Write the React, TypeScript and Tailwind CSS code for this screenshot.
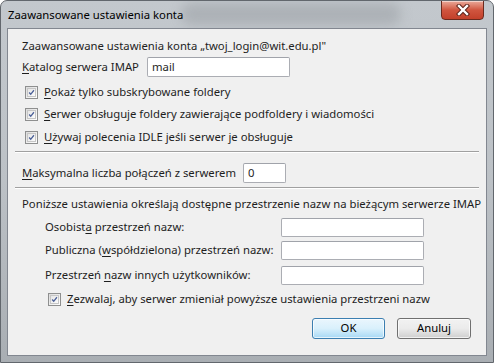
import React from "react";

const font = { fontFamily: '"Noto Sans", "Open Sans", sans-serif' };

function Check() {
  return (
    <span className="inline-flex w-[13px] h-[13px] border border-[#8e8f8f] bg-gradient-to-br from-[#dcdcdc] to-[#ffffff] items-center justify-center shrink-0">
      <span className="w-[9px] h-[9px] border border-[#c6c6c6] bg-gradient-to-br from-[#e6e6e6] to-[#fbfbfb] flex items-center justify-center">
        <svg width="9" height="9" viewBox="0 0 9 9">
          <path d="M1.5 4.5 L3.5 6.8 L7.6 1.6" fill="none" stroke="#4a5f97" strokeWidth="1.7" />
        </svg>
      </span>
    </span>
  );
}

function CheckRow({ u, rest, className = "" }: { u: string; rest: string; className?: string }) {
  return (
    <div className={`flex items-center h-[20px] gap-[6px] whitespace-nowrap ${className}`}>
      <Check />
      <span>
        <span className="underline underline-offset-2">{u}</span>
        {rest}
      </span>
    </div>
  );
}

function Field({ value = "", className = "" }: { value?: string; className?: string }) {
  return (
    <div
      className={`bg-white border border-[#abadb3] border-t-[#a0a3aa] rounded-[2px] flex items-center pl-[4px] shrink-0 ${className}`}
    >
      {value}
    </div>
  );
}

function Separator({ className = "" }: { className?: string }) {
  return (
    <div className={`mx-[7px] ${className}`}>
      <div className="h-px bg-[#a0a0a0]" />
      <div className="h-px bg-white" />
    </div>
  );
}

export default function App() {
  return (
    <div
      className="relative w-[494px] h-[363px] rounded-t-[7px] border border-[#62676d] bg-gradient-to-b from-[#c3c8cd] via-[#bcc1c6] to-[#a9aeb3] text-[11.3px] text-[#1e1e1e] overflow-hidden whitespace-nowrap"
      style={font}
    >
      {/* blurred glass spots */}
      <div className="absolute left-[180px] top-[2px] w-[220px] h-[22px] rounded-full bg-[#9ea3a8] opacity-60 blur-[6px]" />

      {/* title bar */}
      <div className="relative h-[27px] flex items-center pl-[7px] pt-[2px] text-black">
        Zaawansowane ustawienia konta
      </div>

      {/* close button */}
      <div className="absolute top-[-1px] right-[9px] w-[43px] h-[20px] rounded-b-[4px] border border-[#6b2a1e] bg-gradient-to-b from-[#e9a99a] via-[#d0553f] to-[#c3402a] flex items-center justify-center shadow-[inset_0_1px_0_rgba(255,255,255,0.5)]">
        <svg width="14" height="12" viewBox="0 0 14 12">
          <path d="M3 2 L11 10 M11 2 L3 10" stroke="#5b2219" strokeWidth="4.4" strokeLinecap="square" />
          <path d="M3 2 L11 10 M11 2 L3 10" stroke="#ffffff" strokeWidth="2.4" strokeLinecap="square" />
        </svg>
      </div>

      {/* client area */}
      <div className="relative mx-[6px] h-[328px] border border-[#828790] bg-[#f0f0f0] flex flex-col">
        <div className="pl-[14px] mt-[8px] h-[18px] flex items-center">
          Zaawansowane ustawienia konta „twoj_login@wit.edu.pl"
        </div>

        <div className="pl-[14px] mt-[2px] h-[20px] flex items-center">
          <span className="w-[125px]">
            <span className="underline underline-offset-2">K</span>atalog serwera IMAP
          </span>
          <Field value="mail" className="w-[143px] h-[20px]" />
        </div>

        <CheckRow u="P" rest="okaż tylko subskrybowane foldery" className="pl-[17px] mt-[5px]" />
        <CheckRow
          u="S"
          rest="erwer obsługuje foldery zawierające podfoldery i wiadomości"
          className="pl-[17px] mt-[2px]"
        />
        <CheckRow
          u="U"
          rest="żywaj polecenia IDLE jeśli serwer je obsługuje"
          className="pl-[17px] mt-[3px]"
        />

        <Separator className="mt-[4px]" />

        <div className="pl-[14px] mt-[10px] h-[20px] flex items-center">
          <span className="w-[221px]">
            <span className="underline underline-offset-2">M</span>aksymalna liczba połączeń z serwerem
          </span>
          <Field value="0" className="w-[43px] h-[20px]" />
        </div>

        <Separator className="mt-[4px]" />

        <div className="pl-[14px] mt-[6px] h-[18px] flex items-center">
          Poniższe ustawienia określają dostępne przestrzenie nazw na bieżącym serwerze IMAP
        </div>

        <div className="pl-[37px] mt-[5px] h-[19px] flex items-center">
          <span className="w-[236px]">
            Osobist<span className="underline underline-offset-2">a</span> przestrzeń nazw:
          </span>
          <Field className="w-[143px] h-[19px]" />
        </div>
        <div className="pl-[37px] mt-[4px] h-[19px] flex items-center">
          <span className="w-[236px]">
            Publiczna (<span className="underline underline-offset-2">w</span>spółdzielona) przestrzeń nazw:
          </span>
          <Field className="w-[143px] h-[19px]" />
        </div>
        <div className="pl-[37px] mt-[6px] h-[19px] flex items-center">
          <span className="w-[236px]">
            Przestrzeń <span className="underline underline-offset-2">n</span>azw innych użytkowników:
          </span>
          <Field className="w-[143px] h-[19px]" />
        </div>

        <CheckRow
          u="Z"
          rest="ezwalaj, aby serwer zmieniał powyższe ustawienia przestrzeni nazw"
          className="pl-[40px] mt-[4px]"
        />

        <div className="mt-[9px] flex justify-end gap-[12px] pr-[15px]">
          <button className="w-[73px] h-[21px] rounded-[3px] border border-[#3c7fb1] bg-gradient-to-b from-[#eaf6fd] via-[#d9f0fc] to-[#a7d9f5] shadow-[inset_0_0_0_1px_rgba(255,255,255,0.7)] text-black">
            OK
          </button>
          <button className="w-[74px] h-[21px] rounded-[3px] border border-[#707070] bg-gradient-to-b from-[#f2f2f2] via-[#ebebeb] to-[#cfcfcf] shadow-[inset_0_0_0_1px_rgba(255,255,255,0.7)] text-black">
            Anuluj
          </button>
        </div>
      </div>
    </div>
  );
}
